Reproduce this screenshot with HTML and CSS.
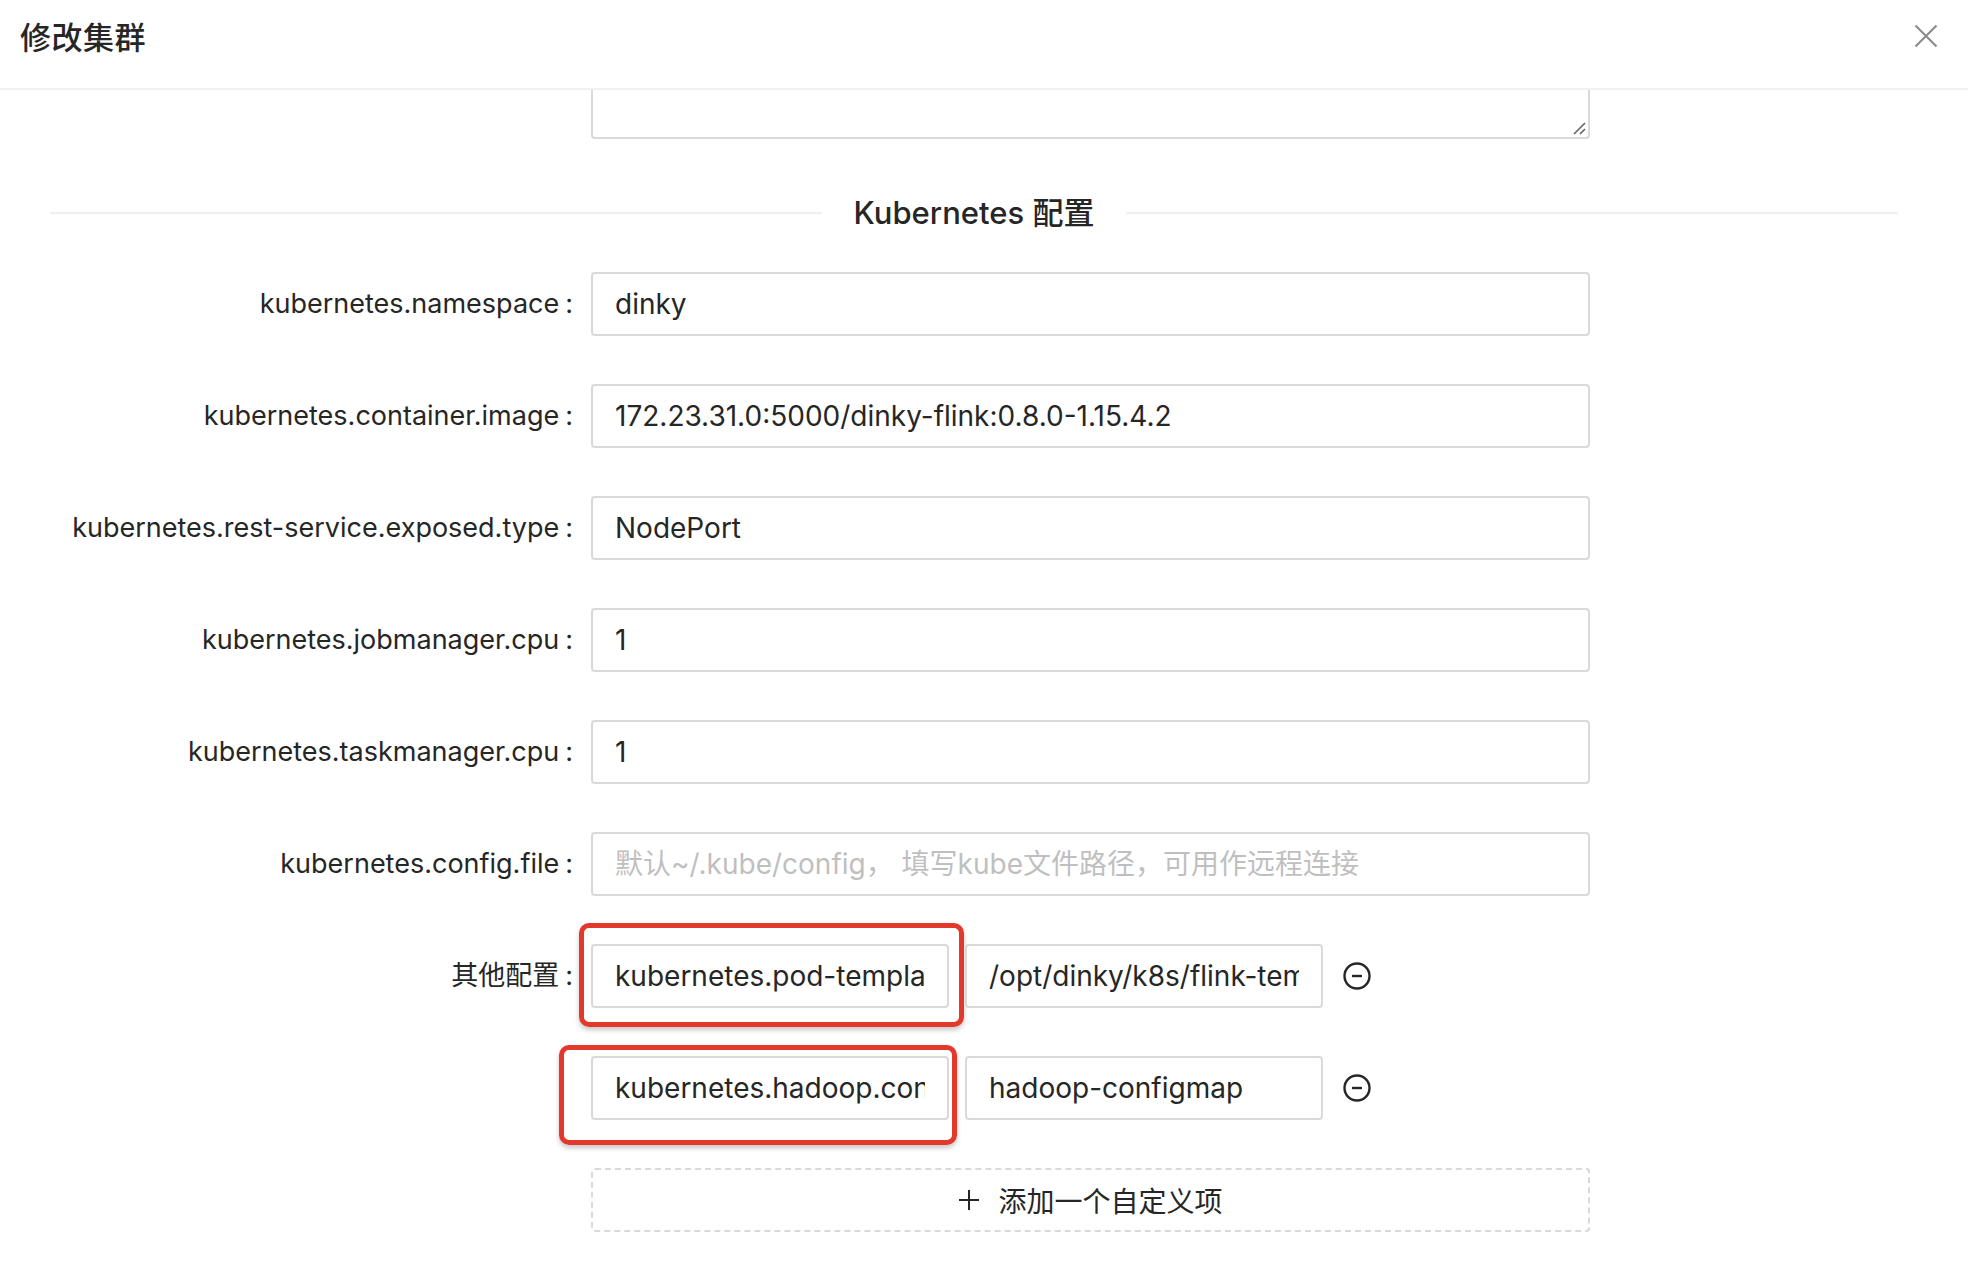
FILE: index.html
```html
<!DOCTYPE html>
<html lang="zh-CN">
<head>
<meta charset="utf-8">
<title>修改集群</title>
<link rel="stylesheet" href="styles.css">
</head>
<body>
<div class="modal">
  <header class="modal-header">
    <h1 class="modal-title">修改集群</h1>
    <button class="modal-close" type="button" aria-label="关闭">
      <svg viewBox="0 0 24 24" width="24" height="24"><path d="M1.5 1.5 L22.5 22.5 M22.5 1.5 L1.5 22.5" stroke="#8c8c8c" stroke-width="2.2" fill="none"/></svg>
    </button>
  </header>
  <div class="modal-body">
    <div class="textarea-tail">
      <svg class="grip" viewBox="0 0 14 14" width="14" height="14"><path d="M2 13 L13 2 M8 13 L13 8" stroke="#666" stroke-width="1.6" fill="none"/></svg>
    </div>

    <div class="divider"><span class="divider-text">Kubernetes 配置</span></div>

    <div class="form">
      <div class="form-row">
        <label class="form-label">kubernetes.namespace</label>
        <div class="form-control"><div class="input">dinky</div></div>
      </div>
      <div class="form-row">
        <label class="form-label">kubernetes.container.image</label>
        <div class="form-control"><div class="input">172.23.31.0:5000/dinky-flink:0.8.0-1.15.4.2</div></div>
      </div>
      <div class="form-row">
        <label class="form-label">kubernetes.rest-service.exposed.type</label>
        <div class="form-control"><div class="input">NodePort</div></div>
      </div>
      <div class="form-row">
        <label class="form-label">kubernetes.jobmanager.cpu</label>
        <div class="form-control"><div class="input">1</div></div>
      </div>
      <div class="form-row">
        <label class="form-label">kubernetes.taskmanager.cpu</label>
        <div class="form-control"><div class="input">1</div></div>
      </div>
      <div class="form-row">
        <label class="form-label">kubernetes.config.file</label>
        <div class="form-control"><div class="input placeholder">默认~/.kube/config， 填写kube文件路径，可用作远程连接</div></div>
      </div>
      <div class="form-row">
        <label class="form-label">其他配置</label>
        <div class="form-control pair">
          <div class="input half key"><span class="clip">kubernetes.pod-template-file</span><span class="annot annot-a"></span></div>
          <div class="input half"><span class="clip">/opt/dinky/k8s/flink-template.yaml</span></div>
          <svg class="minus" viewBox="0 0 28 28" width="28" height="28"><circle cx="14" cy="14" r="12.5" stroke="#262626" stroke-width="2.4" fill="none"/><path d="M9 14 H19" stroke="#262626" stroke-width="2.4"/></svg>
        </div>
      </div>
      <div class="form-row">
        <div class="form-label empty"></div>
        <div class="form-control pair">
          <div class="input half key"><span class="clip">kubernetes.hadoop.conf.config-map.name</span><span class="annot annot-b"></span></div>
          <div class="input half"><span class="clip">hadoop-configmap</span></div>
          <svg class="minus" viewBox="0 0 28 28" width="28" height="28"><circle cx="14" cy="14" r="12.5" stroke="#262626" stroke-width="2.4" fill="none"/><path d="M9 14 H19" stroke="#262626" stroke-width="2.4"/></svg>
        </div>
      </div>
      <div class="form-row">
        <div class="form-label empty"></div>
        <div class="form-control">
          <button class="add-btn" type="button">
            <svg viewBox="0 0 22 22" width="22" height="22"><path d="M11 1 V21 M1 11 H21" stroke="#262626" stroke-width="2" fill="none"/></svg>
            <span>添加一个自定义项</span>
          </button>
        </div>
      </div>
    </div>
  </div>
</div>
</body>
</html>
```

FILE: styles.css
```css
* { box-sizing: border-box; }
html, body { margin: 0; padding: 0; background: #fff; }
body {
  font-family: Inter, "Noto Sans CJK SC", "Noto Sans", sans-serif;
  color: #262626;
  width: 1968px;
  height: 1268px;
  overflow: hidden;
}

.modal { width: 1968px; }

.modal-header {
  height: 90px;
  border-bottom: 2px solid #f0f0f0;
  display: flex;
  align-items: flex-start;
  justify-content: space-between;
  padding: 14px 30px 0 20px;
}
.modal-title {
  margin: 0;
  font-family: "Noto Sans CJK SC", sans-serif;
  font-size: 31px;
  line-height: 44px;
  font-weight: 500;
  color: #262626;
  letter-spacing: 0.5px;
}
.modal-close {
  border: 0;
  background: transparent;
  padding: 0;
  margin-top: 10px;
  width: 24px;
  height: 24px;
  cursor: pointer;
}
.modal-close svg { display: block; }

.modal-body { position: relative; }

.textarea-tail {
  position: relative;
  margin-left: 591px;
  width: 999px;
  height: 49px;
  border: 2px solid #d9d9d9;
  border-top: 0;
  border-radius: 0 0 4px 4px;
}
.grip { position: absolute; right: 2px; bottom: 2px; }

.divider {
  display: flex;
  align-items: center;
  margin: 52px 70px 0 50px;
  height: 44px;
}
.divider::before, .divider::after {
  content: "";
  flex: 1;
  border-top: 2px solid #f0f0f0;
}
.divider-text {
  padding: 0 32px;
  font-size: 31px;
  line-height: 44px;
  font-weight: 500;
  color: #262626;
}

.form { margin-top: 37px; }

.form-row {
  display: flex;
  align-items: center;
  height: 64px;
  margin-bottom: 48px;
}
.form-label {
  width: 591px;
  flex: none;
  text-align: right;
  font-size: 27px;
  line-height: 64px;
  color: #262626;
  padding-right: 18px;
  white-space: nowrap;
}
.form-label::after {
  content: ":";
  margin-left: 6px;
}
.form-label.empty::after { content: none; }

.form-control { width: 999px; flex: none; }
.form-control.pair { display: flex; align-items: center; gap: 16px; }

.input {
  position: relative;
  height: 64px;
  border: 2px solid #d9d9d9;
  border-radius: 4px;
  padding: 0 22px;
  font-size: 28px;
  line-height: 60px;
  color: #262626;
  white-space: nowrap;
  background: #fff;
}
.input.placeholder { color: #bfbfbf; }
.input.half { width: 358px; }
.clip { display: block; overflow: hidden; }

.minus { flex: none; margin-left: 4px; }

.annot {
  position: absolute;
  border: 5px solid #e3392c;
  border-radius: 10px;
  box-shadow: 0 3px 5px rgba(0, 0, 0, 0.22);
  pointer-events: none;
}
.annot-a { left: -14px; right: -17px; top: -23px; bottom: -21px; }
.annot-b { left: -34px; right: -10px; top: -13px; bottom: -27px; }

.add-btn {
  width: 999px;
  height: 64px;
  border: 2px dashed #d9d9d9;
  border-radius: 4px;
  background: #fff;
  display: flex;
  align-items: center;
  justify-content: center;
  gap: 18px;
  font-family: inherit;
  font-size: 28px;
  color: #262626;
  padding: 0;
}
.add-btn svg { display: block; }
```
